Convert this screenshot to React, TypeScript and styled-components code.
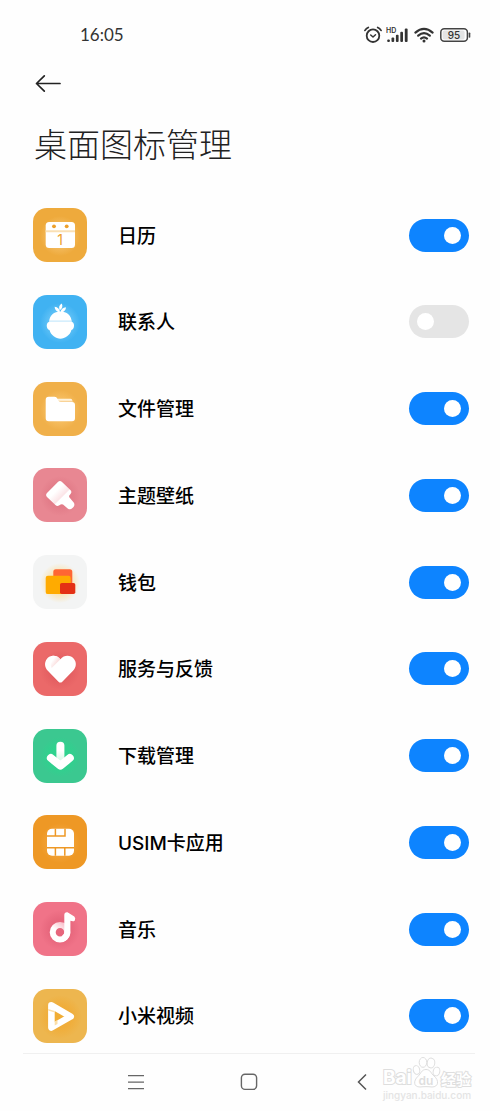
import React, { useState } from 'react';
import styled, { createGlobalStyle } from 'styled-components';

const GlobalStyle = createGlobalStyle`
  *, *::before, *::after { box-sizing: border-box; }
  body {
    margin: 0;
    background: #fefefe;
    color: #000;
    font-family: Inter, 'Noto Sans CJK SC', sans-serif;
  }
`;

const Page = styled.div`
  display: flex;
  flex-direction: column;
  min-height: 100vh;
`;

const StatusBar = styled.header`
  display: flex;
  align-items: center;
  justify-content: space-between;
  height: 68px;
  padding: 2px 29px 0 80px;
`;

const Clock = styled.time`
  font: 400 17px/24px Lato, sans-serif;
  color: #333;
`;

const StatusIcons = styled.div`
  display: flex;
  align-items: center;
  gap: 4px;

  svg { display: block; }
`;

const BackButton = styled.button`
  display: flex;
  width: 28px;
  height: 28px;
  margin: 2px 0 0 34px;
  padding: 0;
  border: 0;
  background: none;
  cursor: pointer;
`;

const Title = styled.h1`
  margin: 21px 34px 0;
  font: 300 33px/48px 'Noto Sans CJK SC', sans-serif;
  color: #222;
`;

const AppList = styled.ul`
  display: flex;
  flex: 1;
  flex-direction: column;
  justify-content: space-between;
  gap: 24px;
  margin: 0;
  padding: 41px 31px 10px 33px;
  list-style: none;
`;

const AppRow = styled.li`
  display: flex;
  align-items: center;
  height: 54px;
`;

const Tile = styled.svg<{ $color: string }>`
  flex: none;
  width: 54px;
  height: 54px;
  border-radius: 14px;
  background: ${({ $color }) => $color};
`;

const AppName = styled.label`
  flex: 1;
  padding: 3px 0 0 31px;
  font-size: 19px;
  font-weight: 500;
  line-height: 28px;
`;

const Switch = styled.input`
  appearance: none;
  display: flex;
  align-items: center;
  flex: none;
  width: 60px;
  height: 33px;
  margin: 0;
  padding: 0 8px;
  border-radius: 17px;
  background: #e5e5e5;
  cursor: pointer;

  &::before {
    content: '';
    width: 17px;
    height: 17px;
    border-radius: 50%;
    background: #fff;
  }

  &:checked {
    justify-content: flex-end;
    background: #0d84ff;
  }
`;

const NavBar = styled.nav`
  position: relative;
  display: grid;
  grid-template-columns: repeat(3, 1fr);
  align-items: center;
  justify-items: center;
  height: 58px;
  margin: 0 25px 0 23px;
  padding: 0 56px 1px;
  border-top: 1px solid #f0f0f0;
`;

const NavButton = styled.button`
  display: flex;
  padding: 0;
  border: 0;
  background: none;
  cursor: pointer;
`;

const Watermark = styled.div`
  position: absolute;
  right: 2px;
  bottom: 8px;
  width: 92px;
  pointer-events: none;

  svg { display: block; }
`;

const Glow = ({ id, color, r = 20 }: { id: string; color: string; r?: number }) => (
  <>
    <defs>
      <radialGradient id={id}>
        <stop offset="0.5" stopColor={color} stopOpacity="0.6" />
        <stop offset="1" stopColor={color} stopOpacity="0" />
      </radialGradient>
    </defs>
    <circle cx="27" cy="28" r={r} fill={`url(#${id})`} />
  </>
);

const CalendarArt = () => (
  <>
    <Glow id="calendar" color="#f8c878" />
    <rect x="12.7" y="14" width="29.3" height="26" rx="3.5" fill="#fff" />
    <path d="M12.7 22.3h29.3v2H12.7z" fill="#fae0b4" />
    <circle cx="21" cy="18.3" r="1.9" fill="#eda02c" />
    <circle cx="33.7" cy="18.3" r="1.9" fill="#eda02c" />
    <text x="27" y="36.5" textAnchor="middle" fontFamily="Inter, sans-serif" fontSize="14" fill="#eda02c">1</text>
  </>
);

const ContactsArt = () => (
  <>
    <Glow id="contacts" color="#7ccffa" />
    <path d="M16.2 27C16.4 20.4 21 16.6 27.4 16.6S38.5 20.4 38.7 27C42 27.2 41.8 34.2 38.4 35C37 40.4 32 43.7 27.4 43.7S18 40.4 16.5 35C13 34.2 12.8 27.2 16.2 27Z" fill="#fff" />
    <path d="M16.2 25.5h22.4v1.2H16.2z" fill="#c9eafc" />
    <path d="M27 17.5C23.5 16.7 21.7 14.7 21.6 11.8C24.8 12.2 26.8 14 27 17.5ZM26.7 15.2C25.5 12.2 26.2 10 28.8 8.6C30 11.5 29.4 13.8 26.7 15.2ZM27.5 17.5C28 14.3 29.8 12.6 32.9 12.3C33 15.2 31 17.2 27.5 17.5Z" fill="#fff" />
  </>
);

const FilesArt = () => (
  <>
    <Glow id="files" color="#fcca74" />
    <path d="M24 16.7H37.5a1.8 1.8 0 0 1 1.8 1.8V22H24Z" fill="#fff3dc" />
    <path d="M25 18.7h14.3v1.3H26Z" fill="#f9d397" />
    <path d="M15.7 14.7H21.5C23.2 14.7 23.6 15.5 24.5 17C25.4 18.8 26 20 28 20H39C41 20 42 21 42 23V36.3C42 38.3 41 39.3 39 39.3H15.7C13.7 39.3 12.7 38.3 12.7 36.3V17.7C12.7 15.7 13.7 14.7 15.7 14.7Z" fill="#fff" />
  </>
);

const ThemesArt = () => (
  <>
    <defs>
      <linearGradient id="bristle" x1="0" y1="0" x2="1" y2="1">
        <stop offset="0.35" stopColor="#fff" />
        <stop offset="0.56" stopColor="#fbe3e6" />
        <stop offset="0.57" stopColor="#fff" />
      </linearGradient>
    </defs>
    <Glow id="themes" color="#dd7280" />
    <path d="M24.9 13.9Q27 12 29 13.9L37.4 22Q39.3 24 37.5 26L36.3 27.6Q35.8 28.5 36.5 29.5L40.7 34.5Q42.3 37 40.3 39.3Q37.7 42.3 35 40.7L30 36.6Q28.8 35.7 27.6 36.6L26 37.6Q24.1 38.7 22.4 37.1L14 28.9Q12.2 27 14 25.1Z" fill="url(#bristle)" />
  </>
);

const WalletArt = () => (
  <>
    <Glow id="wallet" color="#ffd880" r={20} />
    <rect x="20.3" y="14.3" width="19" height="18" rx="2.5" fill="#ff6633" />
    <rect x="12.7" y="20.8" width="25" height="18.3" rx="2.2" fill="#ffab00" />
    <rect x="27" y="28" width="15.3" height="11.1" rx="1.8" fill="#e43014" />
  </>
);

const FeedbackArt = () => (
  <>
    <defs>
      <linearGradient id="fold" x1="0" y1="0" x2="1" y2="0.8">
        <stop offset="0.3" stopColor="#fff" />
        <stop offset="1" stopColor="#f7c4c4" />
      </linearGradient>
    </defs>
    <Glow id="feedback" color="#de575b" />
    <path d="M27.4 17.2C23.6 12.6 17 12.8 13.8 17C11.1 20.6 11.6 25.5 14.8 28.8L25.5 39.7Q27.4 41.5 29.3 39.7L40 28.8C43.4 25.3 43.8 20.6 41 17C37.8 12.8 31.2 12.6 27.4 17.2Z" fill="#fff" />
    <path d="M18.5 14Q24 13.2 27.4 17.2L18.6 26Q16 20 18.5 14Z" fill="url(#fold)" />
  </>
);

const DownloadsArt = () => (
  <>
    <defs>
      <linearGradient id="stem" x1="0" y1="0" x2="0" y2="1">
        <stop offset="0.4" stopColor="#fff" />
        <stop offset="0.85" stopColor="#d4fae6" />
      </linearGradient>
    </defs>
    <Glow id="downloads" color="#25d98c" />
    <rect x="23.4" y="12.7" width="8" height="22" rx="4" fill="url(#stem)" />
    <path d="M17.9 29L27.4 36.6L36.8 29" fill="none" stroke="#fff" strokeWidth="8" strokeLinecap="round" strokeLinejoin="round" />
  </>
);

const SimArt = () => (
  <>
    <Glow id="sim" color="#f5ab48" />
    <rect x="14" y="13.7" width="27" height="27" rx="5" fill="#fff" />
    <path d="M14 21H32V13.7M22.4 13.7V21M14 32.8H41M22.4 32.8V40.7M31.8 32.8V40.7" fill="none" stroke="#ee9825" strokeWidth="1.5" />
  </>
);

const MusicArt = () => (
  <>
    <defs>
      <linearGradient id="ring" x1="0" y1="1" x2="0.8" y2="0">
        <stop offset="0.5" stopColor="#fff" />
        <stop offset="1" stopColor="#fac5cf" />
      </linearGradient>
    </defs>
    <Glow id="music" color="#e05d74" />
    <circle cx="27" cy="30.3" r="7.3" fill="none" stroke="url(#ring)" strokeWidth="6" />
    <path d="M31.3 13Q31.4 9.8 34.5 10.2L41.3 14.6Q42.9 16.2 41.8 18.4Q40.7 19.9 37.4 18.8V30.3C37.4 34 35 37.5 31.7 39.3L28.8 34.2Q31.3 32.8 31.3 30.3Z" fill="#fff" />
  </>
);

const VideoArt = () => (
  <>
    <Glow id="video" color="#f2a72b" r={22} />
    <path d="M18.4 16.4L37.7 27.5L18.4 38.5Z" fill="#f1ad34" stroke="#fff" strokeWidth="6.6" strokeLinejoin="round" />
    <path d="M15.1 20L21.7 22V23.5L15.1 21.5ZM21.7 32.8L24.5 31V35L21.7 36.6Z" fill="#fbdfa9" />
  </>
);

const apps = [
  { id: 'calendar', name: '日历', color: '#eeaa3c', Art: CalendarArt, on: true },
  { id: 'contacts', name: '联系人', color: '#40b2f2', Art: ContactsArt, on: false },
  { id: 'files', name: '文件管理', color: '#f0b04a', Art: FilesArt, on: true },
  { id: 'themes', name: '主题壁纸', color: '#e88792', Art: ThemesArt, on: true },
  { id: 'wallet', name: '钱包', color: '#f3f4f4', Art: WalletArt, on: true },
  { id: 'feedback', name: '服务与反馈', color: '#eb6969', Art: FeedbackArt, on: true },
  { id: 'downloads', name: '下载管理', color: '#3bc890', Art: DownloadsArt, on: true },
  { id: 'sim', name: 'USIM卡应用', color: '#ee9825', Art: SimArt, on: true },
  { id: 'music', name: '音乐', color: '#f07388', Art: MusicArt, on: true },
  { id: 'video', name: '小米视频', color: '#edb64f', Art: VideoArt, on: true },
];

const AlarmIcon = () => (
  <svg width="18" height="18" viewBox="0 0 18 18" fill="none" stroke="#333" strokeLinecap="round">
    <circle cx="9" cy="9.7" r="6.3" strokeWidth="1.8" />
    <path d="M6.7 9L9 11L11.5 8.8" strokeWidth="1.5" strokeLinejoin="round" />
    <path d="M1 4.4Q2.2 2.4 4.3 1.5M17 4.4Q15.8 2.4 13.7 1.5" strokeWidth="1.8" />
  </svg>
);

const SignalIcon = () => (
  <svg width="24" height="16" viewBox="0 0 24 16" fill="#333">
    <text x="0" y="6" fontFamily="Inter, sans-serif" fontSize="7" fontWeight="600">HD</text>
    <rect x="1.2" y="12.4" width="2.7" height="2.6" rx="1" />
    <rect x="5.5" y="10.4" width="2.7" height="4.6" rx="1" />
    <rect x="9.9" y="7.8" width="2.7" height="7.2" rx="1" />
    <rect x="14.3" y="4.8" width="2.7" height="10.2" rx="1" />
    <rect x="18.8" y="1.5" width="2.8" height="13.5" rx="1" />
  </svg>
);

const WifiIcon = () => (
  <svg width="22" height="16" viewBox="0 0 22 16" fill="none" stroke="#333" strokeWidth="2.2" strokeLinecap="round">
    <path d="M1.4 5.6Q10-1.8 18.6 5.6M4.2 8.7Q10 3.7 15.8 8.7M7 11.6Q10 9 13 11.6" />
    <circle cx="10" cy="13.9" r="1.5" fill="#333" stroke="none" />
  </svg>
);

const BatteryIcon = () => (
  <svg width="31" height="14" viewBox="0 0 31 14">
    <rect x="0.8" y="0.8" width="26.6" height="12.4" rx="3.5" fill="#fff" stroke="#444" strokeWidth="1.5" />
    <rect x="2.6" y="2.6" width="22" height="8.8" rx="1.6" fill="#e4e4e4" />
    <path d="M29.5 5.2V9" stroke="#444" strokeWidth="1.6" strokeLinecap="round" />
    <text x="14" y="10.6" textAnchor="middle" fontFamily="Inter, sans-serif" fontSize="10" fontWeight="500" fill="#333">95</text>
  </svg>
);

const BaiduMark = () => (
  <svg width="92" height="46" viewBox="0 0 92 46" fill="#fff" stroke="#dedede" strokeWidth="1">
    <g fontFamily="Inter, 'Noto Sans CJK SC', sans-serif" fontWeight="700" paintOrder="stroke" strokeWidth="2">
      <text x="2" y="27" fontSize="19">Bai</text>
      <text x="60" y="28" fontSize="15">经验</text>
    </g>
    <ellipse cx="35.5" cy="13" rx="3.2" ry="4.4" transform="rotate(-15 35.5 13)" />
    <ellipse cx="42" cy="5.4" rx="3.8" ry="4.9" />
    <ellipse cx="50" cy="6" rx="3.8" ry="4.9" transform="rotate(8 50 6)" />
    <ellipse cx="55.5" cy="14.5" rx="3.3" ry="4.4" transform="rotate(15 55.5 14.5)" />
    <path d="M45 12.5C49.5 12.5 50 16.5 53 19C58.5 23.5 57.5 30 51 30C47 29.5 43 29.5 39 30C32.5 30 32 24 37 19.3C40 16.5 40.5 12.5 45 12.5Z" />
    <text x="45" y="27.5" textAnchor="middle" fontFamily="Inter, sans-serif" fontSize="12" fontWeight="600" fill="#dedede" stroke="none">du</text>
    <text x="2" y="42" fontFamily="Inter, sans-serif" fontSize="10" fontWeight="500" fill="#e4e4e4" stroke="none">jingyan.baidu.com</text>
  </svg>
);

export default function App() {
  const [enabled, setEnabled] = useState<Record<string, boolean>>(
    Object.fromEntries(apps.map((app) => [app.id, app.on])),
  );

  return (
    <Page>
      <GlobalStyle />
      <StatusBar>
        <Clock>16:05</Clock>
        <StatusIcons>
          <AlarmIcon />
          <SignalIcon />
          <WifiIcon />
          <BatteryIcon />
        </StatusIcons>
      </StatusBar>
      <BackButton type="button" aria-label="返回">
        <svg width="28" height="28" viewBox="0 0 28 28" fill="none" stroke="#222" strokeWidth="1.7" strokeLinecap="round" strokeLinejoin="round">
          <path d="M26 13.5H2.5M10.3 5.8L2.5 13.5L10.3 21.2" />
        </svg>
      </BackButton>
      <Title>桌面图标管理</Title>
      <AppList>
        {apps.map(({ id, name, color, Art }) => (
          <AppRow key={id}>
            <Tile $color={color} viewBox="0 0 54 54" aria-hidden="true">
              <Art />
            </Tile>
            <AppName htmlFor={`switch-${id}`}>{name}</AppName>
            <Switch
              id={`switch-${id}`}
              type="checkbox"
              role="switch"
              checked={enabled[id]}
              onChange={(e) => setEnabled({ ...enabled, [id]: e.target.checked })}
            />
          </AppRow>
        ))}
      </AppList>
      <NavBar>
        <NavButton type="button" aria-label="最近任务">
          <svg width="20" height="20" viewBox="0 0 20 20" stroke="#666" strokeWidth="1.4">
            <path d="M2 3.6H18M2 10.1H18M2 16.6H18" />
          </svg>
        </NavButton>
        <NavButton type="button" aria-label="主屏幕">
          <svg width="20" height="20" viewBox="0 0 20 20" fill="none" stroke="#666" strokeWidth="1.4">
            <rect x="2.4" y="2.2" width="15.2" height="15.2" rx="3.6" />
          </svg>
        </NavButton>
        <NavButton type="button" aria-label="返回上一页">
          <svg width="20" height="20" viewBox="0 0 20 20" fill="none" stroke="#555" strokeWidth="1.5">
            <path d="M14 2.5L6.5 10L14 17.5" />
          </svg>
        </NavButton>
        <Watermark>
          <BaiduMark />
        </Watermark>
      </NavBar>
    </Page>
  );
}
